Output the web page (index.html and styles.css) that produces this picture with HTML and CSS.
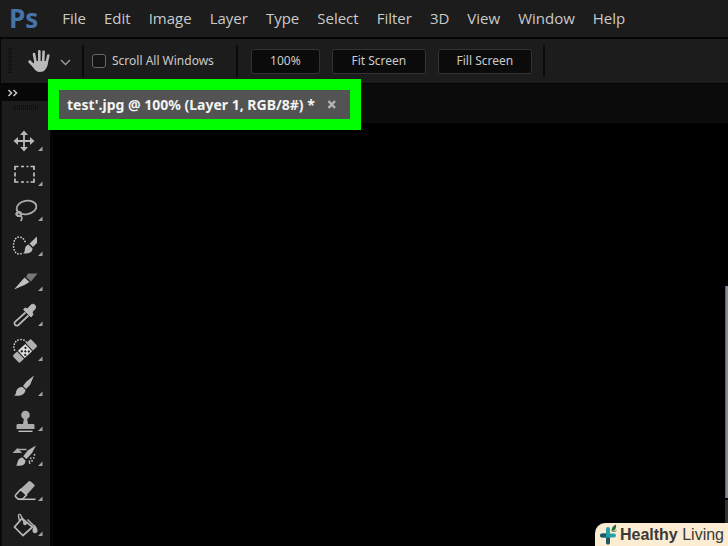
FILE: index.html
```html
<!DOCTYPE html>
<html lang="en">
<head>
<meta charset="utf-8">
<meta name="viewport" content="width=device-width, initial-scale=1">
<title>test'.jpg</title>
<link rel="stylesheet" href="styles.css">
</head>
<body>
<header class="menubar">
  <span class="logo">Ps</span>
  <nav class="menus">
    <button>File</button><button>Edit</button><button>Image</button><button>Layer</button><button>Type</button><button>Select</button><button>Filter</button><button>3D</button><button>View</button><button>Window</button><button>Help</button>
  </nav>
</header>

<section class="options">
  <span class="grip"></span>
  <button class="preset" aria-label="Hand tool">
    <svg width="44" height="26" viewBox="0 0 44 26">
      <g fill="none" stroke="#b9b9b9" stroke-linecap="round" stroke-width="2.600">
        <path d="M7.500 14 6 6M11.300 13V3.300M15.200 13 15.600 3.800M18.600 15 20.300 7.500"/>
        <path d="M1.800 13.700 6 18" stroke-width="3"/>
      </g>
      <path d="M6 13h13.600c.8 3-.2 6-2.200 8.500-1.400 1.800-3.200 2.500-5.500 2.500-3 0-5.200-1.800-6.700-4.500L2.500 15.200l3.500.3z" fill="#b9b9b9"/>
      <path d="m33 12 4.500 4.500 4.500-4.500" fill="none" stroke="#a0a0a0" stroke-width="1.300"/>
    </svg>
  </button>
  <span class="rule"></span>
  <label class="check" for="scroll-all"><input type="checkbox" id="scroll-all">Scroll All Windows</label>
  <span class="rule"></span>
  <div class="zooms">
    <button class="short">100%</button><button>Fit Screen</button><button>Fill Screen</button>
  </div>
  <span class="rule"></span>
</section>

<main class="workspace">
  <aside class="tools">
    <button class="expand" aria-label="Expand panel">
      <svg width="12" height="8" viewBox="0 0 12 8"><path d="m1.500 1 3 3-3 3M6.500 1l3 3-3 3" fill="none" stroke="#c4c4c4" stroke-width="1.600"/></svg>
    </button>
    <span class="tools-grip"></span>
    <button class="tool" aria-label="Move">
      <svg viewBox="0 0 48 35"><path d="M22 10v16M14 18h16" stroke="#b8b8b8" stroke-width="1.800"/><path d="m22 7.500 4 4.500h-8zM22 28.500l4-4.500h-8zM11.500 18l4.500-4v8zM32.500 18l-4.500-4v8z" fill="#b8b8b8"/><path class="corner" d="M40.500 23.500v4.500h-4.500z"/></svg>
    </button>
    <button class="tool" aria-label="Rectangular marquee">
      <svg viewBox="0 0 48 35"><path d="M13 12V8.500h3.500M28.500 8.500H32V12M32 20.500V24h-3.500M16.500 24H13v-3.500M19 8.500h3M24.500 8.500h2M19 24h3M24.500 24h2M13 14.500v4M32 14.500v4" fill="none" stroke="#c0c0c0" stroke-width="1.700"/><path class="corner" d="M40.500 23.500v4.500h-4.500z"/></svg>
    </button>
    <button class="tool" aria-label="Lasso">
      <svg viewBox="0 0 48 35"><g fill="none" stroke="#acacac" stroke-width="1.800"><ellipse cx="24.500" cy="14.500" rx="10" ry="6.700" transform="rotate(-10 24.500 14.500)"/><circle cx="17" cy="21" r="2.200"/><path d="M15 19.500c-2 2-.5 3.500 2.500 3.200 2.500-.2 3 2.500 1.300 5.300"/></g><path class="corner" d="M40.500 23.500v4.500h-4.500z"/></svg>
    </button>
    <button class="tool" aria-label="Quick selection">
      <svg viewBox="0 0 48 35"><path d="M23 13.500c-1-3-3.500-4.500-6-4.500-3.500 0-5.500 4-5.500 8.500s2 8.500 5.500 8.500c1.500 0 3-.5 4-1.500" fill="none" stroke="#d0d0d0" stroke-width="1.700" stroke-linecap="round" stroke-dasharray=".1 2.800"/><path d="M35 8.500v6.500l-4 4-3.500-3.500zM26.500 16.500l4 4c0 4-4 5.500-9.500 5 2-1 1.500-3 2-5 .5-2 1.700-3.500 3.500-4z" fill="#bababa"/><path class="corner" d="M40.500 23.500v4.500h-4.500z"/></svg>
    </button>
    <button class="tool" aria-label="Slice">
      <svg viewBox="0 0 48 35"><path d="m12 26.500 10.500-12 5 4.500-5 3z" fill="#c0c0c0"/><path d="M26 10.500h9.500l-6.500 8-5-4.500z" fill="#777"/><path class="corner" d="M40.500 23.500v4.500h-4.500z"/></svg>
    </button>
    <button class="tool" aria-label="Eyedropper">
      <svg viewBox="0 0 48 35"><path d="M23.500 14.500 12.700 24.200c-.8 2 .7 4 3.300 3.200l10.500-9.900" fill="#1c1c1c" stroke="#b8b8b8" stroke-width="1.800"/><path d="m21.500 11.500 2-1.500 2 1 3-3.500c1.500-2 5-1.500 5 1.500 0 1.800-.8 2.800-3.500 5l1 2.500-2 2.500z" fill="#b8b8b8" stroke="#b8b8b8" stroke-linejoin="round"/><path class="corner" d="M40.500 23.500v4.500h-4.500z"/></svg>
    </button>
    <button class="tool" aria-label="Healing brush">
      <svg viewBox="0 0 48 35"><path d="M12.500 17c-2-5 1-10.500 6.500-10.500 2.500 0 4.500 1 5.500 3" fill="none" stroke="#d0d0d0" stroke-width="1.700" stroke-linecap="round" stroke-dasharray=".1 2.800"/><g transform="rotate(-43 23 18)"><rect x="10.500" y="13" width="25" height="10" rx="1.500" fill="#b0b0b0"/><rect x="17.500" y="12.500" width="11" height="11" fill="#dedede" stroke="#1c1c1c"/><path d="M19.500 15h2v2h-2zM24.500 15h2v2h-2zM22 17.500h2v2h-2zM19.500 20h2v2h-2zM24.500 20h2v2h-2z" fill="#222"/></g><path class="corner" d="M40.500 23.500v4.500h-4.500z"/></svg>
    </button>
    <button class="tool" aria-label="Brush">
      <svg viewBox="0 0 48 35"><path d="M32 7.500 28 17l-4 4-3-3 3.500-4.500zM20.500 19l3 3c-.5 4.500-5 6.500-11.500 5.500 2.500-1 1.500-2.700 2.500-5 1-2.500 3.500-4 6-3.500z" fill="#b8b8b8"/><path class="corner" d="M40.500 23.500v4.500h-4.500z"/></svg>
    </button>
    <button class="tool" aria-label="Clone stamp">
      <svg viewBox="0 0 48 35"><circle cx="23.500" cy="12" r="4.300" fill="#acacac"/><path d="M22 15h3l1 6h5c1 0 1.500.5 1.500 1.500V26h-18v-3.500c0-1 .5-1.500 1.500-1.500h5z" fill="#acacac"/><path d="M16.500 28.300h14" stroke="#c0c0c0" stroke-width="1.400"/><path class="corner" d="M40.500 23.500v4.500h-4.500z"/></svg>
    </button>
    <button class="tool" aria-label="History brush">
      <svg viewBox="0 0 48 35"><path d="m10.500 15 5-5 4.500 5z" fill="#a8a8a8"/><path d="M16 11.500h8.500" stroke="#a8a8a8" stroke-width="1.500"/><path d="M34 7.500 30 15l-5.500 6-3.300-2.800 4.800-6zM20.500 19.500l3 3c0 4.500-3.500 6-9.500 5 1.500-1 1-2.500 2-4.700.8-2 2.300-3.300 4.500-3.300z" fill="#b8b8b8"/><path d="M32.500 16v1c-.5 4-3 7.500-6.500 9M29 19.500c-.5 2-1.500 4-3 5" fill="none" stroke="#c8c8c8" stroke-width="1.500" stroke-dasharray="1.500 1.800"/><path class="corner" d="M40.500 23.500v4.500h-4.500z"/></svg>
    </button>
    <button class="tool" aria-label="Eraser">
      <svg viewBox="0 0 48 35"><path d="M26.500 8.500c.7-.7 1.500-.7 2.200 0l3.500 3c.6.600.6 1.300 0 2L24.500 22l-6.500-5.500z" fill="#b0b0b0"/><path d="m18.500 16.500-4.700 5.200c-.7.800-.7 1.500 0 2.200l2.500 2.300h4.200l4-4.200z" fill="#1c1c1c" stroke="#c0c0c0" stroke-width="1.500"/><path d="M17 26.300h16.500" stroke="#c0c0c0" stroke-width="1.500"/><path class="corner" d="M40.500 23.500v4.500h-4.500z"/></svg>
    </button>
    <button class="tool" aria-label="Paint bucket">
      <svg viewBox="0 0 48 35"><path d="M20 10.500 30.500 19 21 27.500 12.500 19z" fill="none" stroke="#b8b8b8" stroke-width="1.700"/><path d="m22.500 15.500-3.500-8c-.7-1.800-3-1.300-2.500.8l1 4.500" fill="none" stroke="#b8b8b8" stroke-width="1.400"/><circle cx="23" cy="15.500" r="1.800" fill="#b8b8b8"/><path d="M25.500 11.500 33 19" stroke="#b8b8b8" stroke-width="1.400"/><path d="M32.500 16.500c1.500 2 3 4 3 6 0 1.700-1 2.700-2.500 2.700s-2.500-1-2.500-2.700c0-2 1.300-4 2-6z" fill="#b8b8b8"/><path class="corner" d="M40.500 23.500v4.500h-4.500z"/></svg>
    </button>
  </aside>

  <section class="document">
    <div class="tabs">
      <div class="tab">
        <span>test'.jpg @ 100% (Layer 1, RGB/8#) *</span>
        <button class="close" aria-label="Close">
          <svg width="10" height="10" viewBox="0 0 10 10"><path d="m1.500 1 6.500 7M8 1l-6.500 7" stroke="#b5b5b5" stroke-width="2.400"/></svg>
        </button>
      </div>
    </div>
    <div class="canvas"><div class="edge"></div></div>
  </section>
</main>

<div class="brand">
  <svg width="20" height="22" viewBox="0 0 20 22">
    <path d="M9 5v13.500" stroke="#27a3ad" stroke-width="4" stroke-linecap="round"/>
    <path d="M3 11.500h12" stroke="#27a3ad" stroke-width="4" stroke-linecap="round"/>
    <path d="M3 11.500h4M9 14.500v4" stroke="#205565" stroke-width="4" stroke-linecap="round"/>
    <path d="M7 9.500h4v4H7z" fill="#279ca7"/>
    <path d="M12.500 7c0-3.500 2-5.500 4.500-6.500.5 3.500-.5 6-4.500 6.500z" fill="#2c6a35"/>
    <path d="M12.500 7c1.500 0 4-.2 5.500-1-1 2-3.500 2.500-5.500 1z" fill="#3b8744"/>
  </svg>
  <span><b>Healthy</b> Living</span>
</div>
</body>
</html>
```
FILE: styles.css
```css
* {
  box-sizing: border-box;
}

body {
  margin: 0;
  min-height: 100vh;
  display: flex;
  flex-direction: column;
  position: relative;
  overflow: hidden;
  background: #000;
  color: #cacaca;
  font: 12px/16px "Noto Sans", "Open Sans", sans-serif;
}

button {
  margin: 0;
  padding: 0;
  border: 0;
  background: none;
  color: inherit;
  font: inherit;
}

svg {
  display: block;
}

.menubar {
  display: flex;
  align-items: center;
  gap: 24px;
  height: 39px;
  padding: 0 9px 2px;
  background: #1c1c1c;
  border-bottom: 2px solid #060606;
}

.logo {
  color: #4674a8;
  font: bold 26px/34px "Open Sans", sans-serif;
}

.menus {
  display: flex;
  gap: 18px;
  font: 15px/20px "Open Sans", "Noto Sans", sans-serif;
}

.options {
  display: flex;
  align-items: center;
  height: 45px;
  padding-left: 7px;
  background: #1c1c1c;
  border-left: 1px solid #060606;
  border-bottom: 1px solid #060606;
}

.grip {
  width: 4px;
  height: 26px;
  background: repeating-linear-gradient(#101010 0 1px, #1c1c1c 1px 2px);
}

.preset {
  margin: 0 10px 0 16px;
}

.rule {
  width: 2px;
  height: 32px;
  background: #0a0a0a;
}

.check {
  display: flex;
  align-items: center;
  gap: 6px;
  margin: 0 22px 0 8px;
}

.check input {
  appearance: none;
  width: 14px;
  height: 14px;
  margin: 0;
  border: 1px solid #686868;
  border-radius: 3px;
  background: #141414;
}

.zooms {
  display: flex;
  gap: 12px;
  margin: 0 11px 0 13px;
}

.zooms button {
  width: 94px;
  height: 25px;
  border: 1px solid #333;
  border-radius: 3px;
  background: #0b0b0b;
}

.zooms .short {
  width: 69px;
}

.workspace {
  flex: 1;
  display: grid;
  grid-template-columns: 53px 1fr;
}

.tools {
  display: flex;
  flex-direction: column;
  background: #1c1c1c;
  border-left: 2px solid #080808;
  border-right: 3px solid #050505;
}

.expand {
  height: 17px;
  padding-left: 5px;
  background: #070707;
}

.tools-grip {
  width: 26px;
  height: 5px;
  margin: 4px 0 13px 11px;
  background: repeating-linear-gradient(90deg, #101010 0 1px, #1c1c1c 1px 2px);
}

.tool {
  height: 35px;
}

.tool svg {
  width: 48px;
  height: 35px;
}

.corner {
  fill: #a4a4a4;
}

.document {
  display: flex;
  flex-direction: column;
}

.tabs {
  display: flex;
  height: 39px;
  padding: 6px 6px 4px;
  background: #0b0b0b;
}

.tab {
  display: flex;
  align-items: center;
  gap: 12px;
  padding: 0 13px 0 8px;
  background: #535353;
  color: #f4f4f4;
  font-size: 14px;
  font-weight: bold;
  white-space: nowrap;
  box-shadow: 0 0 0 11px #0f0;
  z-index: 1;
}

.canvas {
  flex: 1;
  position: relative;
}

.edge {
  position: absolute;
  right: 0;
  top: 163px;
  bottom: 48px;
  width: 3px;
  background: #868b93;
  border-left: 1px solid #666;
}

.edge::after {
  content: "";
  position: absolute;
  top: calc(100% + 2px);
  right: 0;
  width: 3px;
  height: 24px;
  background: #333;
}

.brand {
  position: absolute;
  right: 0;
  bottom: 0;
  z-index: 1;
  display: flex;
  align-items: center;
  gap: 1px;
  height: 23px;
  padding: 0 4px 0 4px;
  border-top-left-radius: 10px;
  background: #fcecd2;
  color: #3a3a36;
  font: 16px/22px "Liberation Sans", sans-serif;
}
```
